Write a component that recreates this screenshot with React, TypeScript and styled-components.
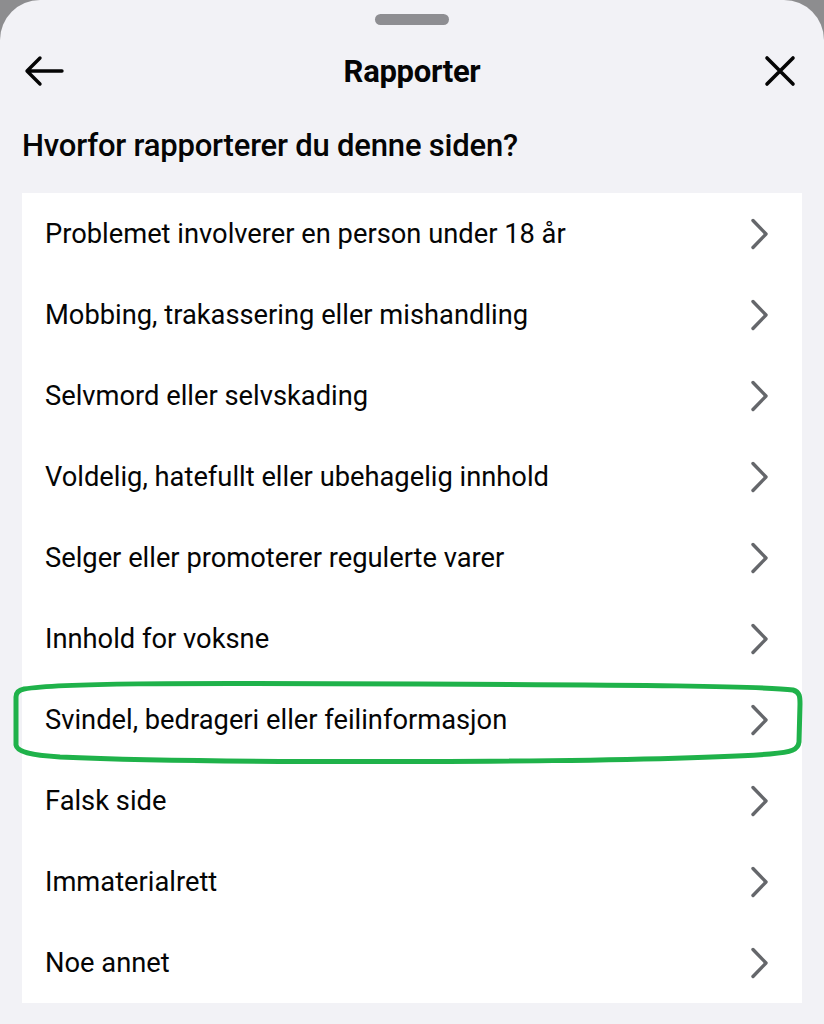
import React from "react";
import styled, { createGlobalStyle } from "styled-components";

const GlobalStyle = createGlobalStyle`
  html, body {
    margin: 0;
    padding: 0;
    background: #8d8d8f;
  }
  body {
    font-family: Roboto, "Noto Sans", "Liberation Sans", sans-serif;
    -webkit-font-smoothing: antialiased;
  }
`;

const Sheet = styled.div`
  position: relative;
  width: 824px;
  height: 1024px;
  box-sizing: border-box;
  background: #f2f2f6;
  border-radius: 40px 40px 0 0;
  padding: 0 22px;
  display: flex;
  flex-direction: column;
  overflow: hidden;
`;

const Handle = styled.div`
  align-self: center;
  width: 74px;
  height: 11px;
  border-radius: 6px;
  background: #8e8e92;
  margin-top: 14px;
`;

const Header = styled.div`
  display: flex;
  align-items: center;
  justify-content: space-between;
  height: 46px;
  margin-top: 23px;
`;

const IconButton = styled.button`
  width: 44px;
  height: 44px;
  padding: 0;
  border: none;
  background: none;
  display: flex;
  align-items: center;
  justify-content: center;
  color: #050505;
`;

const Title = styled.h1`
  margin: 0;
  font-size: 31px;
  font-weight: 700;
  color: #050505;
  letter-spacing: -0.3px;
`;

const Question = styled.h2`
  margin: 0;
  margin-top: 34px;
  font-size: 31px;
  font-weight: 500;
  color: #050505;
  line-height: 36px;
  letter-spacing: -0.2px;
`;

const Card = styled.div`
  margin-top: 29px;
  width: 780px;
  background: #ffffff;
  display: flex;
  flex-direction: column;
`;

const Row = styled.div`
  height: 81px;
  display: flex;
  align-items: center;
  justify-content: space-between;
  padding: 0 32px 0 23px;
  font-size: 27.3px;
  font-weight: 400;
  color: #050505;
`;

const Highlight = styled.svg`
  position: absolute;
  left: 0;
  top: 0;
  pointer-events: none;
`;

const reasons = [
  "Problemet involverer en person under 18 år",
  "Mobbing, trakassering eller mishandling",
  "Selvmord eller selvskading",
  "Voldelig, hatefullt eller ubehagelig innhold",
  "Selger eller promoterer regulerte varer",
  "Innhold for voksne",
  "Svindel, bedrageri eller feilinformasjon",
  "Falsk side",
  "Immaterialrett",
  "Noe annet",
];

const Chevron = () => (
  <svg width="20" height="32" viewBox="0 0 20 32">
    <path
      d="M3 2.5 L16 16 L3 29.5"
      fill="none"
      stroke="#65676b"
      strokeWidth="3.4"
      strokeLinecap="round"
      strokeLinejoin="round"
    />
  </svg>
);

const App: React.FC = () => (
  <>
    <GlobalStyle />
    <Sheet>
      <Handle />
      <Header>
        <IconButton aria-label="Tilbake">
          <svg width="42" height="32" viewBox="0 0 42 32">
            <path
              d="M39 16 H5 M17 3 L4 16 L17 29"
              fill="none"
              stroke="currentColor"
              strokeWidth="3.4"
              strokeLinecap="round"
              strokeLinejoin="round"
            />
          </svg>
        </IconButton>
        <Title>Rapporter</Title>
        <IconButton aria-label="Lukk">
          <svg width="34" height="34" viewBox="0 0 34 34">
            <path
              d="M4 4 L30 30 M30 4 L4 30"
              fill="none"
              stroke="currentColor"
              strokeWidth="3.6"
              strokeLinecap="round"
            />
          </svg>
        </IconButton>
      </Header>
      <Question>Hvorfor rapporterer du denne siden?</Question>
      <Card>
        {reasons.map((r) => (
          <Row key={r}>
            <span>{r}</span>
            <Chevron />
          </Row>
        ))}
      </Card>
      <Highlight width="824" height="1024" viewBox="0 0 824 1024">
        <path
          d="M24 689 C60 683 160 683 420 684 C640 685 760 686 793 690 C800 692 800 697 800 704 L799 742 C798 750 792 752 770 754 C640 763 220 764 60 757 C30 755 17 752 16 745 L16 697 C16 692 19 690 24 689 Z"
          fill="none"
          stroke="#1fb24a"
          strokeWidth="5"
          strokeLinejoin="round"
        />
      </Highlight>
    </Sheet>
  </>
);

export default App;
